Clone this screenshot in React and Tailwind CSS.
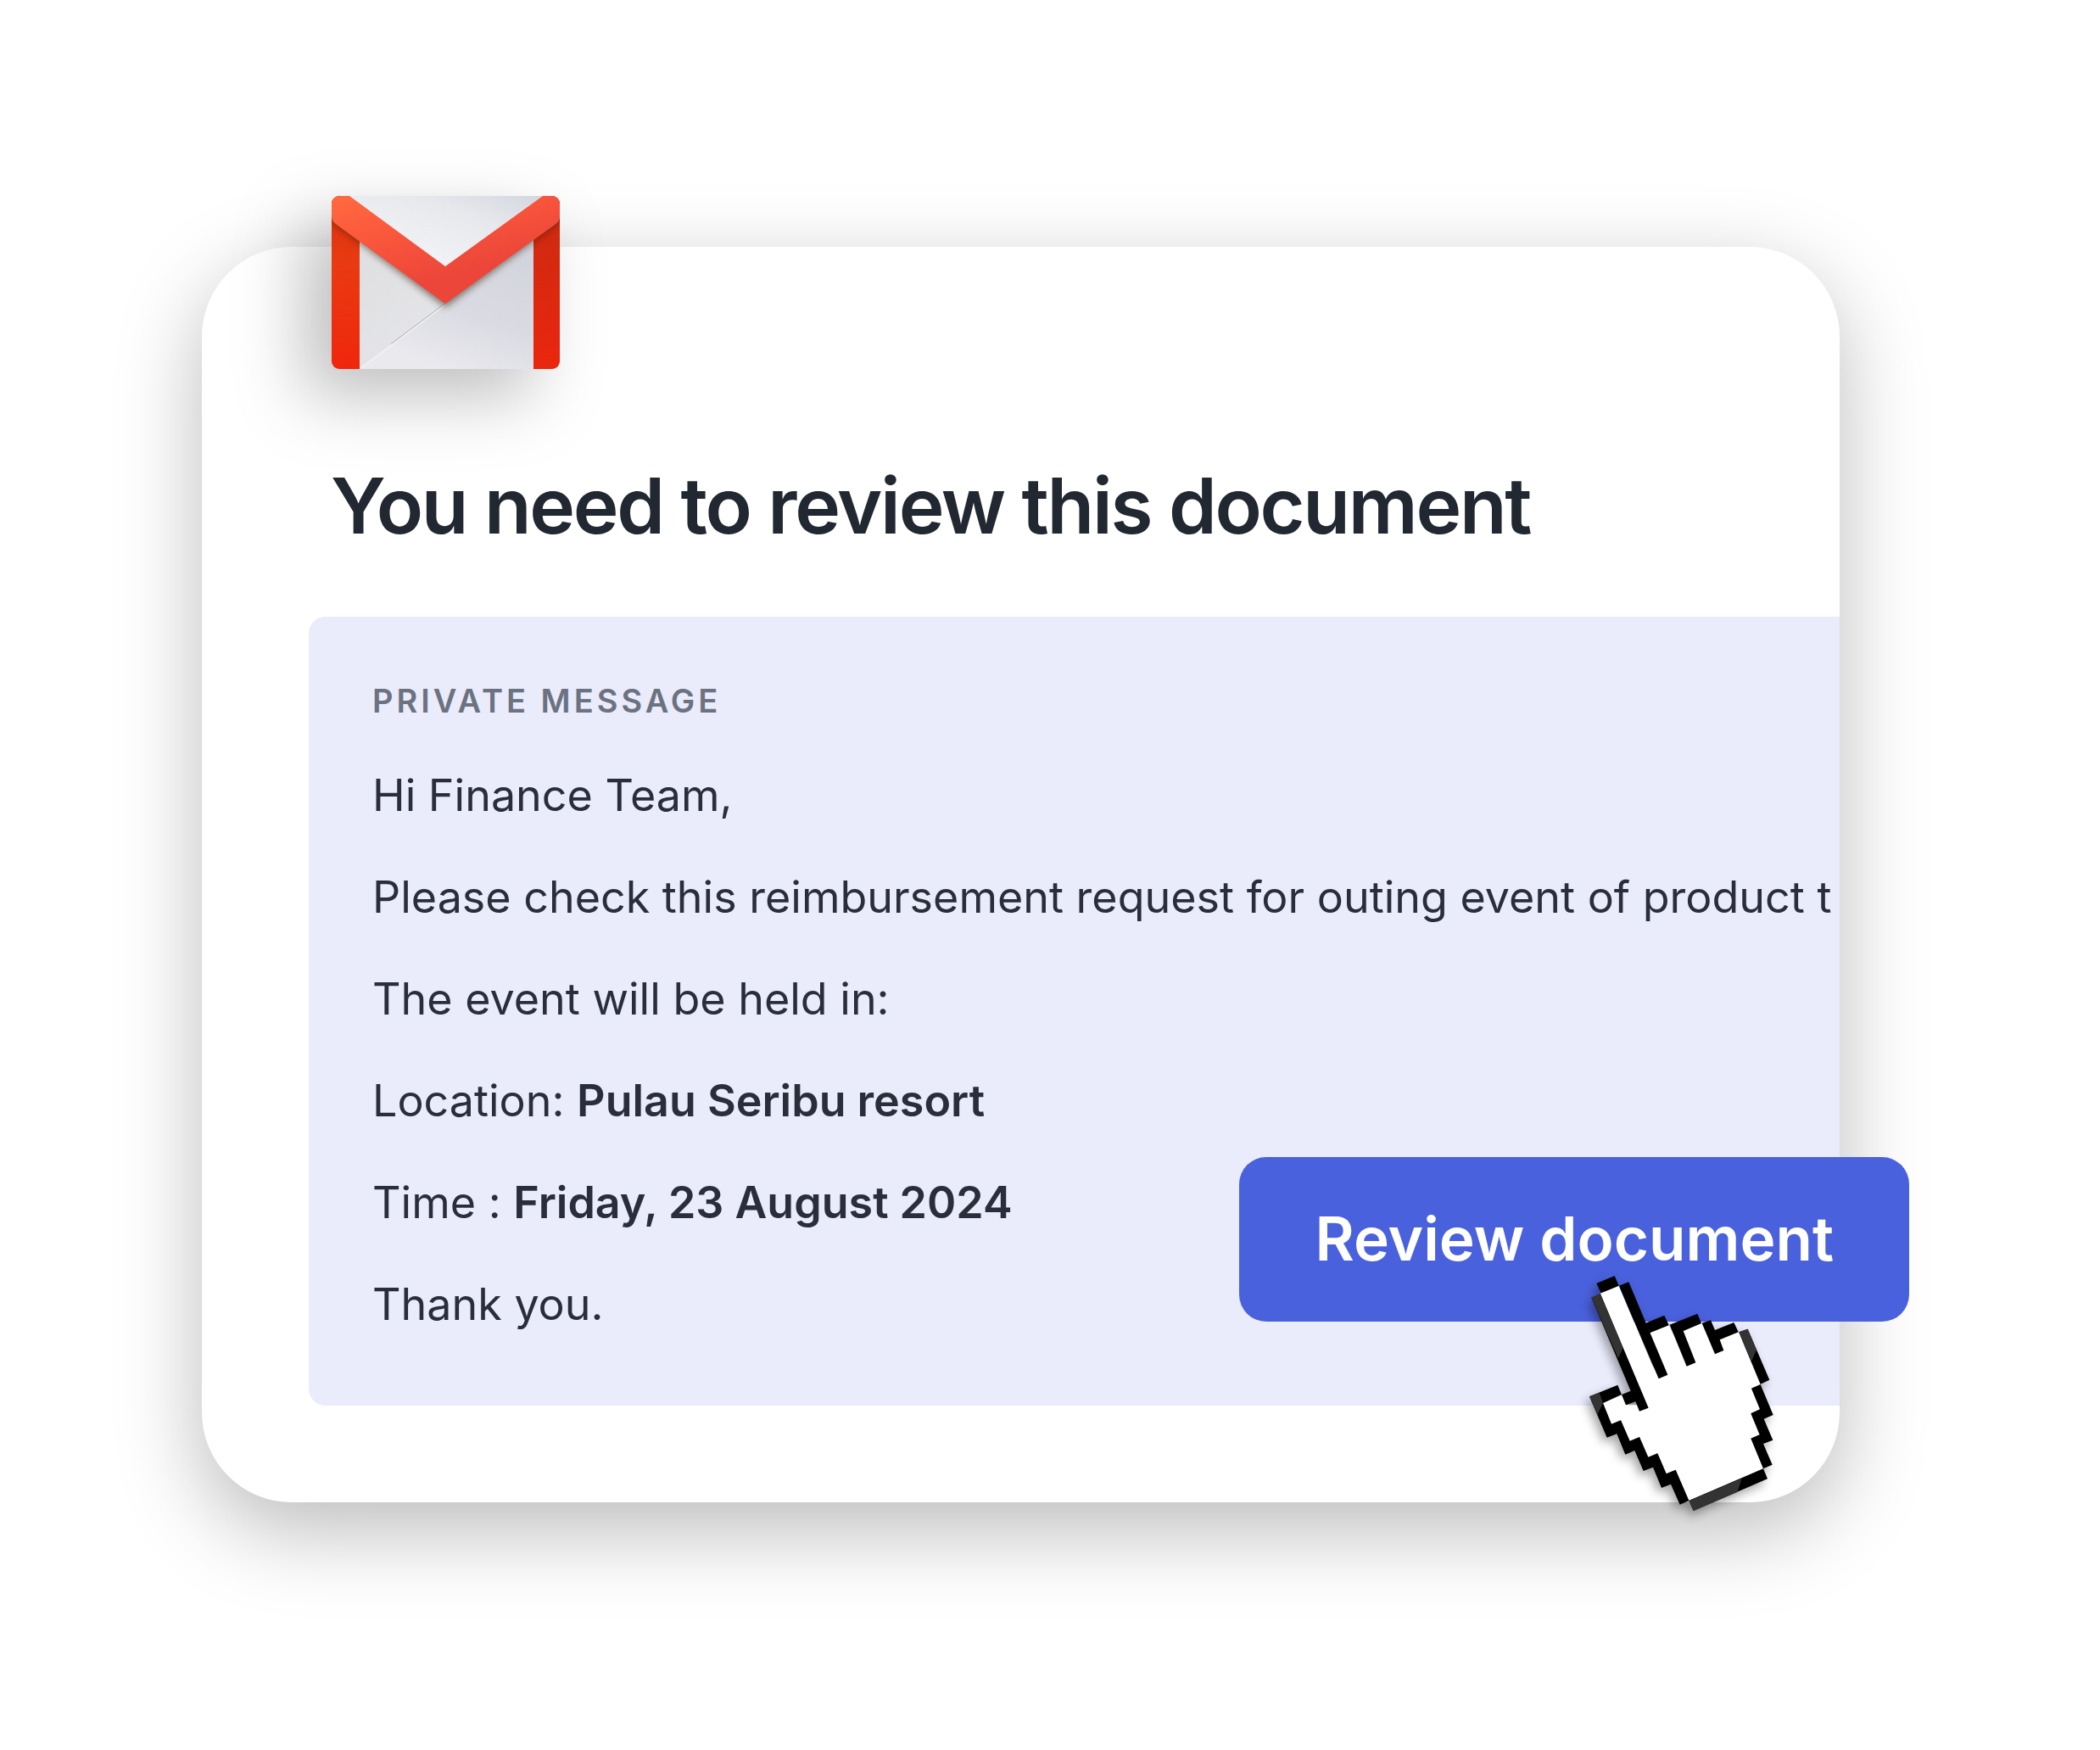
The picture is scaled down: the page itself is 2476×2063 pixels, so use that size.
const messageLines = [
    { text: 'Hi Finance Team,' },
    { text: 'Please check this reimbursement request for outing event of product t' },
    { text: 'The event will be held in:' },
    { text: 'Location: ', strong: 'Pulau Seribu resort' },
    { text: 'Time : ', strong: 'Friday, 23 August 2024' },
    { text: 'Thank you.' },
];

const MailLogo = ({ className }) => (
    <svg viewBox="0 0 269 204" className={className} role="img" aria-label="Gmail">
        <defs>
            <linearGradient id="paper" x1="0" y1="0" x2="1" y2="1">
                <stop offset="0" stopColor="#dcdcde" />
                <stop offset="1" stopColor="#e9eaee" />
            </linearGradient>
            <linearGradient id="paperTop" x1="0.2" y1="0.8" x2="1" y2="0">
                <stop offset="0" stopColor="#f2f4f7" />
                <stop offset="0.6" stopColor="#e6e8ec" />
                <stop offset="1" stopColor="#d3d6df" />
            </linearGradient>
            <linearGradient id="paperRight" x1="1" y1="0" x2="0.5" y2="1">
                <stop offset="0" stopColor="#d0d2dc" />
                <stop offset="0.6" stopColor="#dadbe2" />
                <stop offset="1" stopColor="#e9e9ee" />
            </linearGradient>
            <linearGradient id="sideLeft" x1="0" y1="0" x2="0" y2="1">
                <stop offset="0.1" stopColor="#dc3410" />
                <stop offset="0.4" stopColor="#e93a12" />
                <stop offset="1" stopColor="#f0260c" />
            </linearGradient>
            <linearGradient id="sideRight" x1="0" y1="0" x2="0" y2="1">
                <stop offset="0.2" stopColor="#d02a10" />
                <stop offset="1" stopColor="#ea260e" />
            </linearGradient>
            <linearGradient id="flap" x1="0" y1="0" x2="35" y2="125" gradientUnits="userSpaceOnUse">
                <stop offset="0" stopColor="#ff6a40" />
                <stop offset="0.45" stopColor="#fb583c" />
                <stop offset="1" stopColor="#ec453a" />
            </linearGradient>
            <filter id="flapShadow" x="-20%" y="-20%" width="140%" height="150%">
                <feGaussianBlur stdDeviation="4" />
            </filter>
            <clipPath id="envelope">
                <rect width="269" height="204" rx="9" />
            </clipPath>
        </defs>
        <g clipPath="url(#envelope)">
            <rect width="269" height="204" fill="url(#paper)" />
            <path d="M134 127 238 52V204H33Z" fill="url(#paperRight)" />
            <path d="M134 128 33 204" stroke="#f4f4f6" strokeWidth="1.5" />
            <path d="M134 126.500 70 174.500" stroke="#77777c" strokeWidth="1" opacity="0.5" />
            <path d="M0 0H33V204H0Z" fill="url(#sideLeft)" />
            <path d="M238 0H269V204H238Z" fill="url(#sideRight)" />
            <path d="M0 30 134 131 269 30V0H0Z" fill="#3a2410" opacity="0.6" filter="url(#flapShadow)" />
            <path d="M18 0H252L134 86Z" fill="url(#paperTop)" />
            <path d="M0 9Q0 0 9 0H21L134 83 249 0H260Q269 0 269 9V24Q269 30 263 34L134 127 6 34Q0 30 0 24Z" fill="url(#flap)" />
        </g>
    </svg>
);

const PointerHand = ({ className }) => (
    <svg viewBox="100 70 660 840" className={className} aria-hidden="true">
        <path
            fill="#fff"
            d="M144 134 207 108 330 400 318 274 384 248 455 385 435 268 499 241 555 345 564 299 630 272 708 457 676 471 706 545 674 560 705 635 674 648 718 755 455 868 408 759 375 773 344 701 311 714 280 643 246 657 214 584 181 597 151 523 217 493 232 530 290 530 135 145Z"
        />
        <g fill="#000">
            {/* index finger */}
            <path d="M128 100 192 73 207 108 144 134Z" />
            <path d="M110 150 142 137 312 540 280 552 266 518 232 530 217 493 249 480Z" />
            <path d="M208 108 242 95 380 423 348 437Z" />
            {/* folded fingers */}
            <path d="M302 240 368 213 384 248 316 275Z" />
            <path d="M387 246 485 207 499 241 435 268 479 380 447 393Z" />
            <path d="M501 240 532 230 547 265 614 238 630 272 564 299 578 337 547 350Z" />
            <path d="M632 272 663 261 740 441 708 456Z" />
            {/* right edge of the palm */}
            <path d="M708 457 753 565 720 579 752 654 718 667 750 741 718 755 674 648 705 635 674 560 706 545 676 471Z" />
            <path d="M455 868 718 755 733 791 471 904Z" />
            {/* thumb */}
            <path d="M103 500 203 459 217 493 151 523 181 597 214 584 246 657 280 643 311 714 344 701 375 773 408 759 455 868 423 882 391 810 358 823 328 750 294 763 263 691 230 705 200 632 165 645Z" />
        </g>
        <g fill="#333">
            <path d="M110 150 142 137 222 328 205 365Z" />
            <path d="M632 272 663 261 694 335 676 375Z" />
            <path d="M103 500 138 486 151 523 131 565Z" />
            <path d="M455 868 642 790 626 838 471 904Z" />
        </g>
    </svg>
);

const MessageCard = () => (
    <article className="relative">
        <div className="flex flex-col gap-[75px] overflow-hidden rounded-[106px] bg-white pt-[249px] pb-[114px] pl-[126px] shadow-[0_32px_100px_rgba(0,0,0,0.27)]">
            <h1 className="pl-[26px] text-[91px] leading-[112px] font-semibold tracking-tight whitespace-nowrap text-[#222831]">
                You need to review this document
            </h1>
            <section className="flex flex-col gap-[52px] rounded-l-[20px] bg-[#eaebfb] pt-[75px] pb-[83px] pl-[75px]">
                <h2 className="text-[38px] leading-[48px] font-semibold tracking-[4px] text-[#6b7280]">PRIVATE MESSAGE</h2>
                <div className="flex flex-col gap-12 text-[52px] leading-[72px] text-[#2a2e3a]">
                    {messageLines.map((line) => (
                        <p key={line.text} className="whitespace-nowrap">
                            {line.text}
                            {line.strong && <strong className="font-semibold">{line.strong}</strong>}
                        </p>
                    ))}
                </div>
            </section>
        </div>
        <MailLogo className="absolute -top-[60px] left-[153px] w-[269px] drop-shadow-[-32px_32px_40px_rgba(0,0,0,0.25)]" />
        <button
            type="button"
            className="absolute -right-[82px] bottom-[213px] rounded-[32px] bg-[#4a61dd] px-[89px] pt-[40px] pb-[42px] text-[71px] leading-[112px] font-semibold whitespace-nowrap text-white"
        >
            Review document
        </button>
        <PointerHand className="absolute right-[76px] -bottom-[12px] w-[220px] drop-shadow-[-4px_6px_6px_rgba(0,0,0,0.35)]" />
    </article>
);

const App = () => (
    <main className="min-h-screen bg-white pt-[291px] pr-[307px] pb-[292px] pl-[238px] font-['Inter',sans-serif]">
        <MessageCard />
    </main>
);

export default App;
